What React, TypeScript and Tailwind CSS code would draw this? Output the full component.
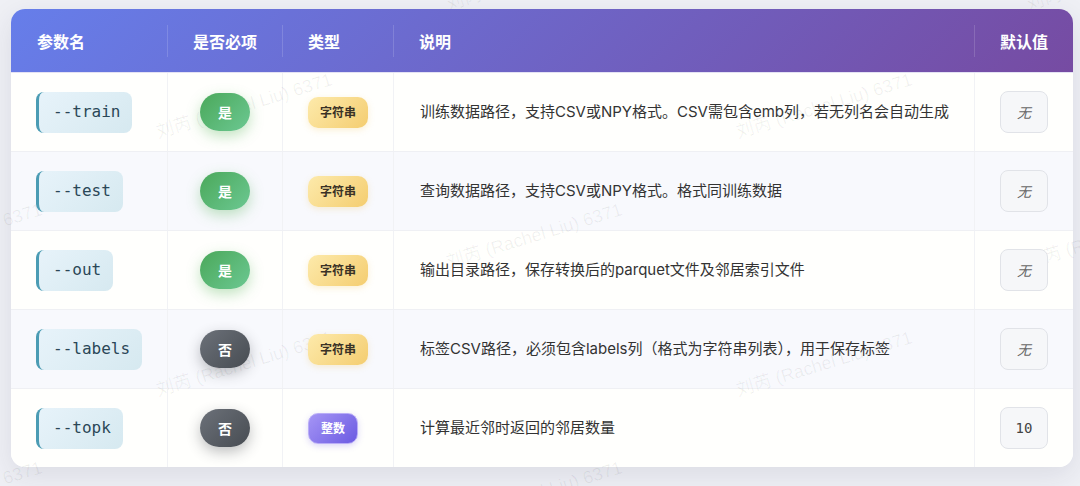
import clsx from "clsx";

type Param = {
  name: string;
  required: boolean;
  type: "字符串" | "整数";
  desc: string;
  def: string;
};

const params: Param[] = [
  {
    name: "--train",
    required: true,
    type: "字符串",
    desc: "训练数据路径，支持CSV或NPY格式。CSV需包含emb列，若无列名会自动生成",
    def: "无",
  },
  {
    name: "--test",
    required: true,
    type: "字符串",
    desc: "查询数据路径，支持CSV或NPY格式。格式同训练数据",
    def: "无",
  },
  {
    name: "--out",
    required: true,
    type: "字符串",
    desc: "输出目录路径，保存转换后的parquet文件及邻居索引文件",
    def: "无",
  },
  {
    name: "--labels",
    required: false,
    type: "字符串",
    desc: "标签CSV路径，必须包含labels列（格式为字符串列表），用于保存标签",
    def: "无",
  },
  {
    name: "--topk",
    required: false,
    type: "整数",
    desc: "计算最近邻时返回的邻居数量",
    def: "10",
  },
];

const headers = ["参数名", "是否必项", "类型", "说明", "默认值"];

// watermark tiles (left, top) — staggered grid
const marks: [number, number][] = [
  [-130, -8],
  [450, -8],
  [1030, -8],
  [160, 120],
  [740, 120],
  [-130, 250],
  [450, 250],
  [1030, 250],
  [160, 378],
  [740, 378],
  [-130, 508],
  [450, 508],
  [1030, 508],
];

const cols = "grid grid-cols-[156px_115px_111px_581px_99px]";

export default function App() {
  return (
    <div className="relative h-[486px] w-[1080px] overflow-hidden bg-[#eff0f5] font-['Inter','Noto_Sans_CJK_SC',sans-serif]">
      <div className="ml-[11px] mt-[9px] w-[1062px] overflow-hidden rounded-[14px] bg-white shadow-[0_8px_28px_rgba(40,40,80,0.10)]">
        {/* header */}
        <div
          className={clsx(
            cols,
            "relative z-20 h-[63px] bg-[linear-gradient(135deg,#667eea_0%,#764ba2_100%)] text-[16px] font-bold text-white"
          )}
        >
          {headers.map((h, i) => (
            <div key={h} className="flex items-center">
              <div
                className={clsx(
                  "flex h-8 items-center font-['Noto_Sans_CJK_SC',sans-serif]",
                  i > 0 ? "border-l border-white/15 pl-[25px]" : "pl-[26px]"
                )}
              >
                {h}
              </div>
            </div>
          ))}
        </div>

        {/* rows */}
        {params.map((p, r) => (
          <div
            key={p.name}
            className={clsx(
              cols,
              "h-[79px]",
              r === 0 ? "border-t border-[#e4e2f4]" : "border-t border-[#eff0f4]",
              r % 2 === 1 ? "bg-[#f8f9fd]" : "bg-[#fffffd]"
            )}
          >
            <div className="flex items-center pl-[25px]">
              <span className="relative z-20 inline-flex h-[41px] items-center rounded-[8px] border-l-[3px] border-[#4b9cb4] bg-[linear-gradient(135deg,#e7f3fa,#d6e9f0)] pl-[14px] pr-[12px] font-['DejaVu_Sans_Mono',monospace] text-[16px] text-[#2a4757]">
                {p.name}
              </span>
            </div>

            <div className="flex items-center justify-center border-l border-[#f1f2f5]">
              <span
                className={clsx(
                  "relative z-20 flex h-[38px] w-[50px] items-center justify-center rounded-full font-['Noto_Sans_CJK_SC',sans-serif] text-[14px] font-bold text-white",
                  p.required
                    ? "bg-[linear-gradient(135deg,#4aa85a,#6cc892)] shadow-[0_5px_14px_rgba(76,175,80,0.35)]"
                    : "bg-[linear-gradient(135deg,#6c7179,#474c52)] shadow-[0_5px_14px_rgba(40,44,50,0.30)]"
                )}
              >
                {p.required ? "是" : "否"}
              </span>
            </div>

            <div className="flex items-center border-l border-[#f1f2f5] pl-[25px]">
              <span
                className={clsx(
                  "relative z-20 flex h-[31px] items-center rounded-[10px] px-[12px] font-['Noto_Sans_CJK_SC',sans-serif] text-[12px] font-bold",
                  p.type === "字符串"
                    ? "bg-[linear-gradient(135deg,#fdeaab,#f4cd70)] text-[#3a3226] shadow-[0_2px_6px_rgba(240,195,90,0.25)]"
                    : "border border-[#b9adf7] bg-[linear-gradient(135deg,#a595f5,#6b5ae2)] text-white shadow-[0_2px_6px_rgba(110,90,230,0.25)]"
                )}
              >
                {p.type}
              </span>
            </div>

            <div className="flex items-center border-l border-[#f1f2f5] pl-[26px] text-[15px] text-[#333]">
              <span className="relative z-20">{p.desc}</span>
            </div>

            <div className="flex items-center border-l border-[#f1f2f5] pl-[25px]">
              <span
                className={clsx(
                  "relative z-20 flex h-[42px] w-[48px] items-center justify-center rounded-[8px] border-[1.5px] border-[#e1e3e8] bg-[#f6f7f9] text-[14px]",
                  p.def === "无"
                    ? "font-['Noto_Sans_CJK_SC',sans-serif] italic text-[#666]"
                    : "font-['DejaVu_Sans_Mono',monospace] text-[#444]"
                )}
              >
                {p.def}
              </span>
            </div>
          </div>
        ))}
      </div>

      {/* watermark, sits above row backgrounds but under the cell content */}
      <div className="pointer-events-none absolute inset-0 z-10">
        {marks.map(([x, y], i) => (
          <span
            key={i}
            className="absolute origin-bottom-left -rotate-[17deg] whitespace-nowrap font-['Liberation_Sans','Noto_Sans_CJK_SC',sans-serif] text-[18px] leading-[24px] text-black/[0.06]"
            style={{ left: x, top: y }}
          >
            刘芮 (Rachel Liu) 6371
          </span>
        ))}
      </div>
    </div>
  );
}
